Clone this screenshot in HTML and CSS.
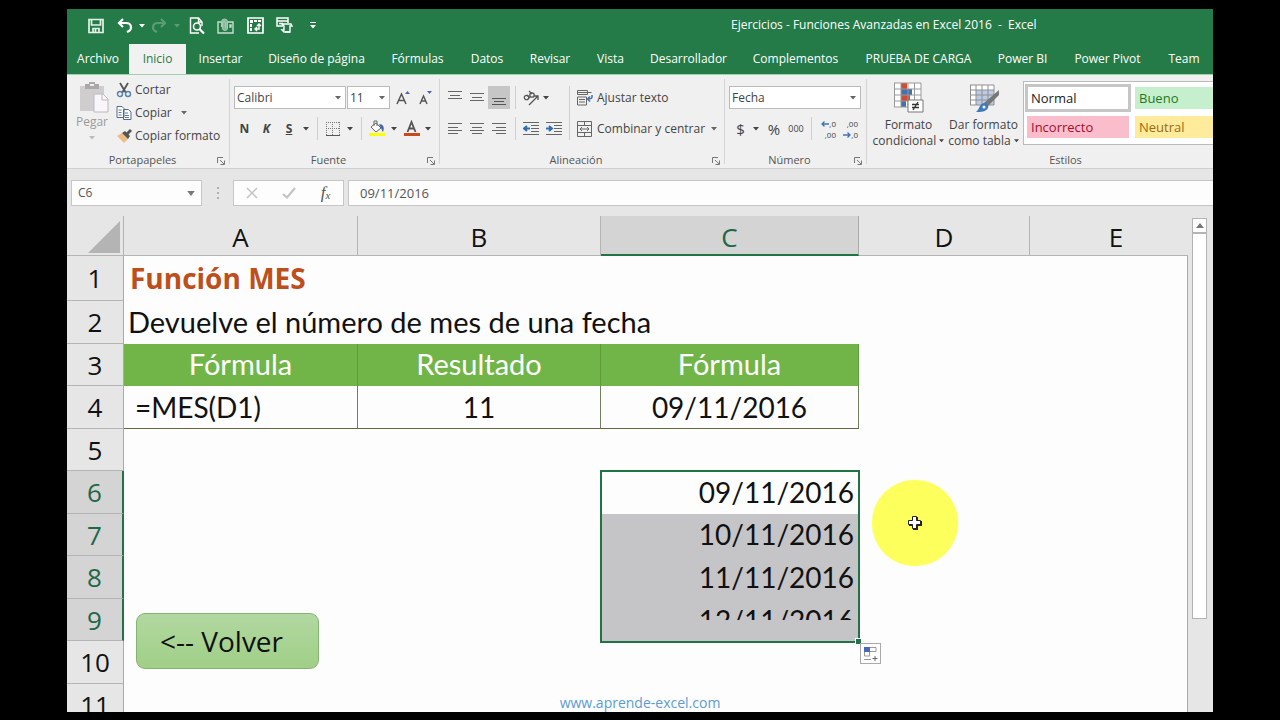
FILE: index.html
```html
<!DOCTYPE html>
<html lang="es">
<head>
<meta charset="utf-8">
<title>Ejercicios - Funciones Avanzadas en Excel 2016 - Excel</title>
<link rel="stylesheet" href="styles.css">
</head>
<body>
<svg class="defs" aria-hidden="true">
  <symbol id="caret" viewBox="0 0 6 4"><path d="M0 0h6L3 3.5z" fill="currentColor"/></symbol>
  <symbol id="launch" viewBox="0 0 8 8"><path d="M.5 6V.5H6M3 3l4 4M7.5 3.5v4h-4" fill="none" stroke="#777"/></symbol>
</svg>
<div class="app">
  <header class="titlebar">
    <div class="quick">
      <button aria-label="Guardar"><svg width="16" height="16" viewBox="0 0 16 16"><path d="M1 1.500h14v13H1zM3.500 1.500v5.500h9V1.500M5 14.500v-4h6v4M7.500 11v3" fill="none" stroke="#e4f3e9" stroke-width="1.700"/></svg></button>
      <button aria-label="Deshacer"><svg width="16" height="16" viewBox="0 0 16 16"><path d="M6 1 2 5l4 4M2 5h7c6 0 6 6 3 8l-2 1" fill="none" stroke="#fff" stroke-width="2.200"/></svg></button>
      <button aria-label="Opciones de deshacer"><svg width="6" height="4"><use href="#caret"/></svg></button>
      <button class="faded" aria-label="Rehacer"><svg width="16" height="16" viewBox="0 0 16 16"><path d="m10 1 4 4-4 4M14 5H7C1 5 1 11 4 13l2 1" fill="none" stroke="#fff" stroke-width="2.200"/></svg></button>
      <button class="faded" aria-label="Opciones de rehacer"><svg width="6" height="4"><use href="#caret"/></svg></button>
      <button aria-label="Vista previa"><svg width="16" height="18" viewBox="0 0 16 18"><path d="M13 9V5L9.500 1H1.500v15H10M9.500 1v4H13" fill="none" stroke="#fff" stroke-width="1.4"/><circle cx="8" cy="9.500" r="3.500" fill="none" stroke="#fff" stroke-width="1.600"/><path d="m10.500 12 4.500 4.500" stroke="#fff" stroke-width="2.200"/></svg></button>
      <button class="soft" aria-label="Adjuntar"><svg width="17" height="16" viewBox="0 0 17 16"><path d="M4 4H1v11h15V4h-5M13 7h1v2h-1z" fill="none" stroke="#fff" stroke-width="1.400"/><path d="M4.500 9V4a3 3 0 0 1 6 0v6a2 2 0 0 1-5 0V5a1.500 1.500 0 0 1 3 0v5" fill="#a8cdb5" stroke="#d5eadc"/></svg></button>
      <button aria-label="Tabla dinámica"><svg width="17" height="17" viewBox="0 0 17 17"><path d="M1 1h15v15H1z" fill="none" stroke="#fff" stroke-width="1.700"/><path d="M3 3h3v3H3zM7 3h3v2H7zM11 3h3v2h-3zM3 7h2v3H3zM3 11h2v3H3z" fill="#fff"/><path d="M8 12h4V7M10 9l2-2 2 2M10 10l-2 2 2 2" fill="none" stroke="#fff" stroke-width="1.400"/></svg></button>
      <button aria-label="Formulario"><svg width="17" height="17" viewBox="0 0 17 17"><path d="M1 1h11v3H1zM1 4v5h6M3 6.500h4M12 4v2" fill="none" stroke="#fff" stroke-width="1.500"/><path d="M6 7h9l1 2h-2v6H8l-2-2h2V9z" fill="#257b47" stroke="#fff" stroke-width="1.400"/><path d="M9 15h5" stroke="#fff" stroke-width="2"/></svg></button>
      <button aria-label="Personalizar"><svg width="6" height="7" viewBox="0 0 6 7"><path d="M0 .5h6" stroke="#fff"/><path d="M0 3h6L3 6.500z" fill="#fff"/></svg></button>
    </div>
    <div class="doc-title">Ejercicios - Funciones Avanzadas en Excel 2016&nbsp; -&nbsp; Excel</div>
  </header>
  <nav class="tabs">
    <button>Archivo</button><button class="active">Inicio</button><button>Insertar</button><button>Diseño de página</button><button>Fórmulas</button><button>Datos</button><button>Revisar</button><button>Vista</button><button>Desarrollador</button><button>Complementos</button><button>PRUEBA DE CARGA</button><button>Power BI</button><button>Power Pivot</button><button>Team</button>
  </nav>

  <section class="ribbon">
    <div class="group clipboard">
      <div class="tools">
        <button class="paste"><svg width="30" height="32" viewBox="0 0 30 32"><path d="M1 4h24v25H1z" fill="#cfcdce"/><path d="M6 2h4V0h6v2h4v5H6z" fill="#aaa8a9"/><path d="M11 2h4v2h-4z" fill="#efefef"/><path d="M15 12h9l5 5v13H15z" fill="#f8f6fa" stroke="#bdb8bd"/><path d="M23 12v6h6" fill="none" stroke="#bdb8bd"/></svg><span>Pegar</span><svg class="paste-caret" width="6" height="4"><use href="#caret"/></svg></button>
        <div class="stack">
          <button><svg width="16" height="16" viewBox="0 0 16 16"><path d="M4 1l6 10M12 1 6 11" stroke="#555" stroke-width="1.800"/><circle cx="4" cy="12" r="2.500" fill="none" stroke="#5682b2" stroke-width="1.400"/><circle cx="12" cy="12" r="2.500" fill="none" stroke="#5682b2" stroke-width="1.400"/></svg>Cortar</button>
          <button><svg width="16" height="16" viewBox="0 0 16 16"><path d="M1 1.500h5l2 2v9H1zM7.500 4.500h5l2.500 2.500v7.500H7.500z" fill="#fff" stroke="#596b80"/><path d="M2.500 5h3M2.500 7.500h3M2.500 10h3M9 8h3M9 10.500h4M9 12.500h4" stroke="#5682b2"/></svg>Copiar<svg class="after" width="6" height="4"><use href="#caret"/></svg></button>
          <button><svg width="16" height="16" viewBox="0 0 16 16"><path d="m1 8 5-3 6 6-4 4z" fill="#edbd82"/><path d="m6 5 3-2 5 5-2 3z" fill="#555"/><path d="m11 6 4-4" stroke="#555" stroke-width="3"/></svg>Copiar formato</button>
        </div>
      </div>
      <div class="caption"><span>Portapapeles</span><svg width="8" height="8"><use href="#launch"/></svg></div>
    </div>

    <div class="group font">
      <div class="rows">
        <div class="row">
          <label class="combo family"><select aria-label="Fuente"><option>Calibri</option></select><svg width="6" height="4"><use href="#caret"/></svg></label>
          <label class="combo size"><select aria-label="Tamaño"><option>11</option></select><svg width="6" height="4"><use href="#caret"/></svg></label>
          <button class="grow" aria-label="Aumentar"><svg width="15" height="16" viewBox="0 0 15 16"><path d="M1 14 5.500 4 10 14M2.500 10.500h6" fill="none" stroke="#555" stroke-width="1.500"/><path d="M9 4h5l-2.500-3z" fill="#4569aa"/></svg></button>
          <button class="shrink" aria-label="Reducir"><svg width="15" height="16" viewBox="0 0 15 16"><path d="M2 14 5.500 6 9 14M3 11h5" fill="none" stroke="#555" stroke-width="1.400"/><path d="M9 1h5l-2.500 3z" fill="#4569aa"/></svg></button>
        </div>
        <div class="row font-row">
          <button class="b">N</button><button class="b i">K</button><button class="b u">S</button><button aria-label="Subrayado"><svg width="6" height="4"><use href="#caret"/></svg></button><i class="sep"></i>
          <button aria-label="Bordes"><svg width="14" height="14" viewBox="0 0 14 14"><path d="M0 .5h14M.5 0v13M13.500 0v13M0 6.500h14M6.500 0v13" stroke="#777" stroke-dasharray="1 1" fill="none"/><path d="M0 13.500h14" stroke="#555"/></svg></button><button aria-label="Tipos de borde"><svg width="6" height="4"><use href="#caret"/></svg></button><i class="sep"></i>
          <button aria-label="Relleno"><svg width="18" height="17" viewBox="0 0 18 17"><path d="m8 3 5 5-5 4-5-5z" fill="#fff" stroke="#666"/><path d="M6 6V1h3v5" fill="none" stroke="#666"/><path d="M11 4c4 0 6 3 4 8-1-1-1-2-2-4z" fill="#3c64aa"/><path d="M1 13h16v3H1z" fill="#ffff00"/></svg></button><button aria-label="Colores de relleno"><svg width="6" height="4"><use href="#caret"/></svg></button>
          <button aria-label="Color de fuente"><svg width="17" height="17" viewBox="0 0 17 17"><path d="M4.500 12 8.500 2l4 10M6 8.500h5" fill="none" stroke="#555" stroke-width="1.800"/><path d="M1 13h16v3H1z" fill="#c8491d"/></svg></button><button aria-label="Colores de fuente"><svg width="6" height="4"><use href="#caret"/></svg></button>
        </div>
      </div>
      <div class="caption"><span>Fuente</span><svg width="8" height="8"><use href="#launch"/></svg></div>
    </div>

    <div class="group align">
      <div class="align-grid">
        <button aria-label="Arriba"><svg width="14" height="14" viewBox="0 0 14 14"><path d="M0 .5h14M2 4.500h10M0 7.500h14" stroke="#666"/></svg></button>
        <button aria-label="Medio"><svg width="14" height="14" viewBox="0 0 14 14"><path d="M0 2.500h14M2 6.500h10M0 9.500h14" stroke="#666"/></svg></button>
        <button class="on" aria-label="Abajo"><svg width="14" height="14" viewBox="0 0 14 14"><path d="M0 7.500h14M2 10.500h10M0 13.500h14" stroke="#555"/></svg></button>
        <i class="sep"></i>
        <button aria-label="Orientación"><svg width="17" height="16" viewBox="0 0 17 16"><g fill="none" stroke="#555" stroke-width="1.300"><circle cx="3.500" cy="7.500" r="2.200"/><path d="m4 5 3 3M6 1l3 3"/><circle cx="9" cy="5" r="2.200"/><path d="m6 15 9-9M11 6h4v4"/></g></svg></button>
        <button class="left" aria-label="Opciones de orientación"><svg width="6" height="4"><use href="#caret"/></svg></button>
        <i class="sep tall"></i>
        <button class="labeled"><svg width="16" height="16" viewBox="0 0 16 16"><path d="M.5.500h10v4H.5zM.5 7h9v8H.5zM.5 2.500h14M2 9.500h6M2 12h6" fill="none" stroke="#666"/><path d="M15 5v2q0 2-4 2M13 6.500 10.500 9l2.500 2.500" fill="none" stroke="#3c74b5" stroke-width="1.500"/></svg>Ajustar texto</button>
        <button aria-label="Izquierda"><svg width="14" height="14" viewBox="0 0 14 14"><path d="M0 1.500h14M0 5.500h10M0 8.500h14M0 11.500h10" stroke="#666"/></svg></button>
        <button aria-label="Centro"><svg width="14" height="14" viewBox="0 0 14 14"><path d="M0 1.500h14M2 5.500h10M0 8.500h14M2 11.500h10" stroke="#666"/></svg></button>
        <button aria-label="Derecha"><svg width="14" height="14" viewBox="0 0 14 14"><path d="M0 1.500h14M4 5.500h10M0 8.500h14M4 11.500h10" stroke="#666"/></svg></button>
        <i class="sep"></i>
        <button aria-label="Disminuir sangría"><svg width="16" height="14" viewBox="0 0 16 14"><path d="M0 .5h16M8 3.500h8M8 6.500h8M8 9.500h8M0 12.500h16" stroke="#666"/><path d="M7 6.500H1M4 4 1 6.500 4 9" fill="none" stroke="#2e6fb4" stroke-width="2"/></svg></button>
        <button aria-label="Aumentar sangría"><svg width="16" height="14" viewBox="0 0 16 14"><path d="M0 .5h16M8 3.500h8M8 6.500h8M8 9.500h8M0 12.500h16" stroke="#666"/><path d="M0 6.500h6M3 4l3 2.500L3 9" fill="none" stroke="#2e6fb4" stroke-width="2"/></svg></button>
        <button class="labeled"><svg width="16" height="16" viewBox="0 0 16 16"><path d="M.5.500h14v15H.5zM.5 4.500h14M.5 11.500h14M7.500.500v4M7.500 11.500v4M3 8h9M5 6 3 8l2 2M10 6l2 2-2 2" fill="none" stroke="#666"/></svg>Combinar y centrar<svg class="near" width="6" height="4"><use href="#caret"/></svg></button>
      </div>
      <div class="caption"><span>Alineación</span><svg width="8" height="8"><use href="#launch"/></svg></div>
    </div>

    <div class="group number">
      <div class="rows">
        <div class="row"><label class="combo wide"><select aria-label="Formato de número"><option>Fecha</option></select><svg width="6" height="4"><use href="#caret"/></svg></label></div>
        <div class="row number-row">
          <button class="sym">$</button><button aria-label="Monedas"><svg width="6" height="4"><use href="#caret"/></svg></button><button class="sym">%</button><button class="zeros">000</button><i class="sep"></i>
          <button class="dec" aria-label="Aumentar decimales"><span><svg width="8" height="6" viewBox="0 0 8 6"><path d="M8 3H1M3.500.500 1 3l2.500 2.500" fill="none" stroke="#3c74b5" stroke-width="1.300"/></svg>,0</span><span>,00</span></button>
          <button class="dec" aria-label="Disminuir decimales"><span>,00</span><span><svg width="8" height="6" viewBox="0 0 8 6"><path d="M0 3h7M4.500.500 7 3 4.500 5.500" fill="none" stroke="#3c74b5" stroke-width="1.300"/></svg>,0</span></button>
        </div>
      </div>
      <div class="caption"><span>Número</span><svg width="8" height="8"><use href="#launch"/></svg></div>
    </div>

    <div class="group styles">
      <div class="tools">
        <button class="big"><svg width="32" height="32" viewBox="0 0 32 32"><path d="M1 2h27v24H1z" fill="#fff"/><path d="M8 2h6v6H8zM8 14h9v6H8z" fill="#cf4b38"/><path d="M8 8h11v6H8zM8 20h5v6H8z" fill="#4472ad"/><path d="M1.500 2v24M8 2v24M15 2v24M21.500 2v24M28 2v24M1 2h27M1 8h27M1 14h27M1 20h27M1 26h27" stroke="#999" fill="none"/><path d="M15 19h15v12H15z" fill="#fff" stroke="#777"/><path d="M19 23.500h7M19 26.500h7M25 21l-5 8" stroke="#333" stroke-width="1.300"/></svg><span>Formato<br>condicional <svg width="5" height="4"><use href="#caret"/></svg></span></button>
        <button class="big"><svg width="32" height="32" viewBox="0 0 32 32"><path d="M2 4h24v20H2z" fill="#fff"/><path d="M8 9h18v15H8z" fill="#bccae5"/><path d="M2.500 4v20M8 4v20M14 4v20M20 4v20M26 4v20M2 4h24M2 9h24M2 14h24M2 19h24M2 24h24" stroke="#909090" fill="none"/><path d="M31 9v5L20 25l-4-3z" fill="#777"/><path d="M16 22c3 0 5 2 4 5-2 4-7 4-12 4 4-3 3-8 8-9z" fill="#3f79bc"/><circle cx="16" cy="26" r="1.500" fill="#fff"/></svg><span>Dar formato<br>como tabla <svg width="5" height="4"><use href="#caret"/></svg></span></button>
        <div class="gallery">
          <button class="normal">Normal</button><button class="good">Bueno</button>
          <button class="bad">Incorrecto</button><button class="neutral">Neutral</button>
        </div>
      </div>
      <div class="caption"><span>Estilos</span></div>
    </div>
  </section>

  <section class="formula-bar">
    <label class="name-box"><input value="C6" aria-label="Cuadro de nombres"><svg width="8" height="5" viewBox="0 0 6 4"><path d="M0 0h6L3 4z" fill="#777"/></svg></label>
    <svg class="dots" width="3" height="13" viewBox="0 0 3 13"><path d="M1 0h2v2H1zM1 5h2v2H1zM1 10h2v2H1z" fill="#b0b0b0"/></svg>
    <div class="fx-box">
      <button aria-label="Cancelar"><svg width="12" height="12" viewBox="0 0 12 12"><path d="m1 1 10 10M11 1 1 11" stroke="#c4c4c4" stroke-width="1.500"/></svg></button>
      <button aria-label="Introducir"><svg width="14" height="12" viewBox="0 0 14 12"><path d="m1 7 4 3.500L13 1" fill="none" stroke="#c4c4c4" stroke-width="2.200"/></svg></button>
      <button class="fx">f<small>x</small></button>
    </div>
    <input class="formula" value="09/11/2016" aria-label="Barra de fórmulas">
  </section>

  <main class="sheet">
    <div class="grid-area">
      <table>
        <colgroup><col class="c-head"><col class="c-a"><col class="c-b"><col class="c-c"><col class="c-d"><col></colgroup>
        <thead><tr><th class="corner"><svg width="32" height="32" viewBox="0 0 32 32"><path d="M32 0v32H0z" fill="#b4b4b4"/></svg></th><th>A</th><th>B</th><th class="sel">C</th><th>D</th><th class="last">E</th></tr></thead>
        <tbody>
          <tr class="first"><th>1</th><td colspan="5" class="heading">Función MES</td></tr>
          <tr><th>2</th><td colspan="5" class="desc">Devuelve el número de mes de una fecha</td></tr>
          <tr class="green"><th>3</th><td>Fórmula</td><td>Resultado</td><td>Fórmula</td><td class="blank" colspan="2"></td></tr>
          <tr class="values"><th>4</th><td class="formula-text">=MES(D1)</td><td>11</td><td>09/11/2016</td><td class="blank" colspan="2"></td></tr>
          <tr><th>5</th><td colspan="5"></td></tr>
          <tr><th class="sel">6</th><td colspan="2"></td><td class="date start">09/11/2016<div class="selection"><i class="handle"></i><button class="fill-options" aria-label="Opciones de autorrelleno"><svg width="16" height="16" viewBox="0 0 16 16"><path d="M1 1h6v5H1z" fill="#4469bd"/><path d="M7 1.500h6v4H7M1.500 6v4h5V6M1 13.500h7" fill="none" stroke="#999"/><path d="M12 10v5M9.500 12.500h5" stroke="#666"/></svg></button></div></td><td colspan="2"></td></tr>
          <tr><th class="sel">7</th><td colspan="2"></td><td class="date filled">10/11/2016</td><td colspan="2"></td></tr>
          <tr><th class="sel">8</th><td colspan="2"></td><td class="date filled">11/11/2016</td><td colspan="2"></td></tr>
          <tr><th class="sel">9</th><td colspan="2"></td><td class="date filled"><div class="partial">12/11/2016</div></td><td colspan="2"></td></tr>
          <tr><th>10</th><td colspan="5"></td></tr>
          <tr><th>11</th><td colspan="5"></td></tr>
        </tbody>
      </table>
      <button class="back">&lt;-- Volver</button>
      <div class="pointer"><svg width="16" height="16" viewBox="0 0 16 16"><path d="M6 2h5v4h4v5h-4v4H6v-4H2V6h4z" fill="#222"/><path d="M5.500 1.500h4v4h4v4h-4v4h-4v-4h-4v-4h4z" fill="#fff" stroke="#222"/></svg></div>
    </div>
    <div class="scrollbar"><button aria-label="Subir"><svg width="8" height="5" viewBox="0 0 8 5"><path d="M4 0l4 5H0z" fill="#777"/></svg></button><div class="thumb"></div></div>
    <a class="site" href="#">www.aprende-excel.com</a>
  </main>
</div>
</body>
</html>
```
FILE: styles.css
```css
* { box-sizing: border-box; }
body {
  margin: 0;
  height: 100vh;
  padding: 9px 67px 8px;
  background: #000;
  overflow: hidden;
  font: 12px/16px "Open Sans", "Noto Sans", sans-serif;
  color: #444;
}
button, input, select { font: inherit; color: inherit; margin: 0; padding: 0; border: 0; background: none; border-radius: 0; }
button { display: flex; align-items: center; justify-content: center; white-space: nowrap; }
svg { flex: none; }
.defs { position: absolute; width: 0; height: 0; }
.app { height: 100%; display: flex; flex-direction: column; overflow: hidden; background: #e6e6e6; }

/* Title bar and tabs */
.titlebar { display: flex; height: 35px; flex: none; background: #257b47; color: #fff; align-items: center; }
.quick {
  display: grid;
  grid-template-columns: 33px 26px 7px 28px 7px 33px 25px 34px 24px 34px;
  padding-left: 12px;
  padding-bottom: 2px;
  flex: 1;
}
.quick button { color: #fff; height: 32px; }
.faded { opacity: .25; }
.soft { opacity: .75; }
.doc-title { flex: 0 0 482px; white-space: nowrap; padding-bottom: 4px; }
.tabs {
  display: grid;
  flex: none;
  height: 30px;
  grid-template-columns: 62px 57px 69px 123px 79px 60px 66px 55px 101px 113px 133px 75px 95px 1fr;
  background: #257b47;
  color: #fff;
}
.tabs .active { background: #f1f1f1; color: #257b47; }

/* Ribbon */
.ribbon { display: flex; height: 95px; flex: none; padding-left: 1px; background: #f0f0f0; border-bottom: 1px solid #cfcfcf; border-top: 1px solid #9fd0b0; }
.group { position: relative; display: flex; flex-direction: column; justify-content: space-between; flex: none; }
.group + .group::before { content: ""; position: absolute; left: -1px; top: 4px; bottom: 4px; border-left: 1px solid #d5d5d5; }
.clipboard { width: 162px; }
.font { width: 210px; }
.align { width: 285px; }
.number { width: 142px; }
.styles { flex: 1; min-width: 0; }
.caption { display: flex; align-items: center; height: 17px; padding-right: 5px; color: #555; font-size: 11px; }
.caption span { flex: 1; text-align: center; }
.caption svg { margin-top: 2px; }
.styles .caption { padding-left: 56px; }
.tools { display: flex; }
.paste { flex-direction: column; width: 48px; padding-top: 7px; color: #999; justify-content: flex-start; }
.paste svg:first-child { margin-left: 4px; }
.paste-caret { margin-top: 6px; color: #bbb; }
.stack { display: flex; flex-direction: column; gap: 7px; padding-top: 7px; }
.stack button { gap: 3px; justify-content: flex-start; height: 16px; }
.after { margin-left: 6px; color: #666; }
.near { margin-left: 2px; color: #666; }
.rows { display: flex; flex-direction: column; gap: 8px; padding: 11px 4px 0; }
.row { display: flex; height: 23px; }
.combo { position: relative; display: flex; background: #fff; border: 1px solid #bbb; }
.combo select { appearance: none; width: 100%; padding-left: 2px; outline: 0; }
.combo svg { position: absolute; right: 4px; top: 9px; color: #666; }
.family { width: 112px; }
.size { width: 43px; margin-left: 1px; }
.wide { width: 132px; }
.grow { margin-left: 6px; }
.shrink { margin-left: 7px; }
.font-row, .number-row { display: grid; }
.font-row { grid-template-columns: 21px 23px 22px 12px 11px 20px 13px 11px 20px 13px 22px 12px; }
.number-row { grid-template-columns: 23px 8px 28px 16px 14px 18px 26px; }
.b { font-weight: 700; }
.i { font-style: italic; }
.u { text-decoration: underline; }
.sep { justify-self: center; width: 1px; height: 100%; background: #cfcfcf; }
.align-grid {
  display: grid;
  grid-template-columns: 22px 22px 22px 10px 22px 24px 7px 1fr;
  grid-template-rows: 23px 23px;
  row-gap: 8px;
  padding: 11px 0 0 4px;
}
.align-grid .tall { grid-row: 1 / 3; grid-column: 7; }
.on { background: #c6c6c6; }
.left { justify-content: flex-start; padding-left: 1px; }
.labeled { gap: 4px; justify-content: flex-start; padding-left: 4px; }
.sym { font-size: 15px; }
.zeros { font-size: 9px; }
.dec { flex-direction: column; align-items: flex-end; font-size: 8px; line-height: 11px; }
.dec + .dec { padding-right: 4px; }
.big { flex-direction: column; justify-content: flex-start; width: 75px; padding-top: 6px; }
.styles .tools { padding-left: 4px; }
.big span { padding-top: 4px; }
.big span svg { vertical-align: 2px; }
.gallery {
  flex: 1;
  min-width: 0;
  align-self: flex-start;
  margin: 6px 0 0 2px;
  display: grid;
  grid-template-columns: 106px 1fr;
  grid-template-rows: 28px 24px;
  gap: 3px 2px;
  align-items: center;
  padding: 2px 0 5px 1px;
  background: #fff;
  border: 1px solid #bbb;
  border-right: 0;
  font-size: 13px;
}
.gallery button { height: 22px; justify-content: flex-start; padding-left: 4px; margin-left: 2px; padding-bottom: 1px; }
.gallery .normal { height: 28px; border: 3px solid #c6c6c6; margin: 0; padding-left: 3px; color: #222; }
.gallery .good { background: #c6efce; color: #1d7a1d; }
.gallery .bad { background: #fabdcc; color: #a00f2c; margin-right: 2px; }
.gallery .neutral { background: #ffeb9c; color: #9c6a10; }

/* Formula bar */
.formula-bar { display: flex; flex: none; height: 37px; padding: 11px 0 0 4px; color: #555; }
.name-box, .fx-box, .formula { background: #fdfdfd; border: 1px solid #c6c6c6; height: 26px; }
.name-box { display: flex; align-items: center; width: 131px; padding: 0 6px; }
.name-box input { flex: 1; min-width: 0; }
.dots { margin: 7px 14px 0; }
.fx-box { display: grid; grid-template-columns: 36px 38px 35px; width: 111px; }
.fx { font: italic 400 17px "Liberation Serif", serif; }
.fx small { font-size: 11px; padding-top: 4px; }
.formula { flex: 1; min-width: 0; margin-left: 4px; padding-left: 11px; border-right: 0; font-size: 13px; }

/* Worksheet */
.sheet { position: relative; flex: 1; min-height: 0; display: flex; padding-top: 10px; overflow: hidden; }
.grid-area { position: relative; flex: 1; min-width: 0; }
table { width: 100%; table-layout: fixed; border-collapse: separate; border-spacing: 0; font: 28px/34px Lato, "Open Sans", sans-serif; color: #111; }
.c-head { width: 57px; }
.c-a { width: 234px; }
.c-b { width: 243px; }
.c-c { width: 258px; }
.c-d { width: 171px; }
th { font: 400 26px/34px "Open Sans", "Noto Sans", sans-serif; padding: 0; background: #e6e6e6; border-right: 1px solid #aaa; border-bottom: 1px solid #b4b4b4; }
thead th { height: 40px; border-color: #b4b4b4; padding-top: 3px; }
thead .last { border-right: 0; padding-left: 14px; }
.corner { text-align: right; }
.corner svg { display: block; margin-left: auto; margin-right: 3px; }
th.sel { background: #d4d4d4; color: #216746; border-right: 2px solid #217346; }
thead th.sel { border-right: 1px solid #aaa; border-bottom: 2px solid #217346; }
td { position: relative; padding: 0 0 2px; background: #fdfdfd; }
td:last-child { border-right: 1px solid #aaa; }
tbody tr { height: 42px; }
tbody tr:nth-child(even) { height: 43px; }
tbody tr.first { height: 45px; }
.heading { color: #bd4f1c; font: 700 28px/34px "Open Sans", "Noto Sans", sans-serif; padding-left: 6px; }
.desc { padding-left: 4px; font-size: 29px; }
.green td, .values td { text-align: center; }
.green td { background: #71b548; color: #fff; font-size: 29px; border-right: 1px solid #5f9c3b; }
.green .blank { background: #fdfdfd; border-right-color: #aaa; }
.values td { border-right: 1px solid #71805c; border-bottom: 1px solid #66663f; padding-bottom: 0; }
.values .formula-text { text-align: left; padding-left: 11px; }
.values .blank { border-bottom: 0; border-right-color: #aaa; }
.date { text-align: right; padding-right: 5px; }
.date.filled { background: #c5c4c7; }
.partial { height: 21px; margin-bottom: 19px; line-height: 42px; overflow: hidden; }
.selection { position: absolute; left: -1px; right: -1px; top: -1px; height: 173px; border: 2px solid #217346; z-index: 1; }
.handle { position: absolute; right: -3px; bottom: -3px; width: 6px; height: 6px; background: #217346; border: 1px solid #fff; border-width: 1px 0 0 1px; }
.fill-options { position: absolute; left: 258px; top: 171px; width: 21px; height: 21px; background: #fff; border: 1px solid #aaa; }
.back {
  position: absolute;
  left: 69px;
  top: 397px;
  width: 183px;
  height: 56px;
  padding-right: 12px;
  border: 1px solid #86b573;
  border-radius: 9px;
  background: linear-gradient(#b2d8a2, #a0cf87);
  font-size: 28px;
  color: #111;
}
.pointer { position: absolute; left: 805px; top: 264px; width: 86px; height: 86px; border-radius: 50%; background: #fdff5c; box-shadow: 0 0 2px #fdff9c; display: grid; place-items: center; }
.scrollbar { width: 25px; padding: 2px 6px 0 4px; display: flex; flex-direction: column; }
.scrollbar button { height: 15px; background: #fff; border: 1px solid #b4b4b4; }
.thumb { height: 386px; background: #fff; border: 1px solid #b4b4b4; }
.site { position: absolute; left: 0; right: 0; bottom: 1px; text-align: center; color: #5b9bd5; text-decoration: none; font-size: 14px; pointer-events: none; }
```
